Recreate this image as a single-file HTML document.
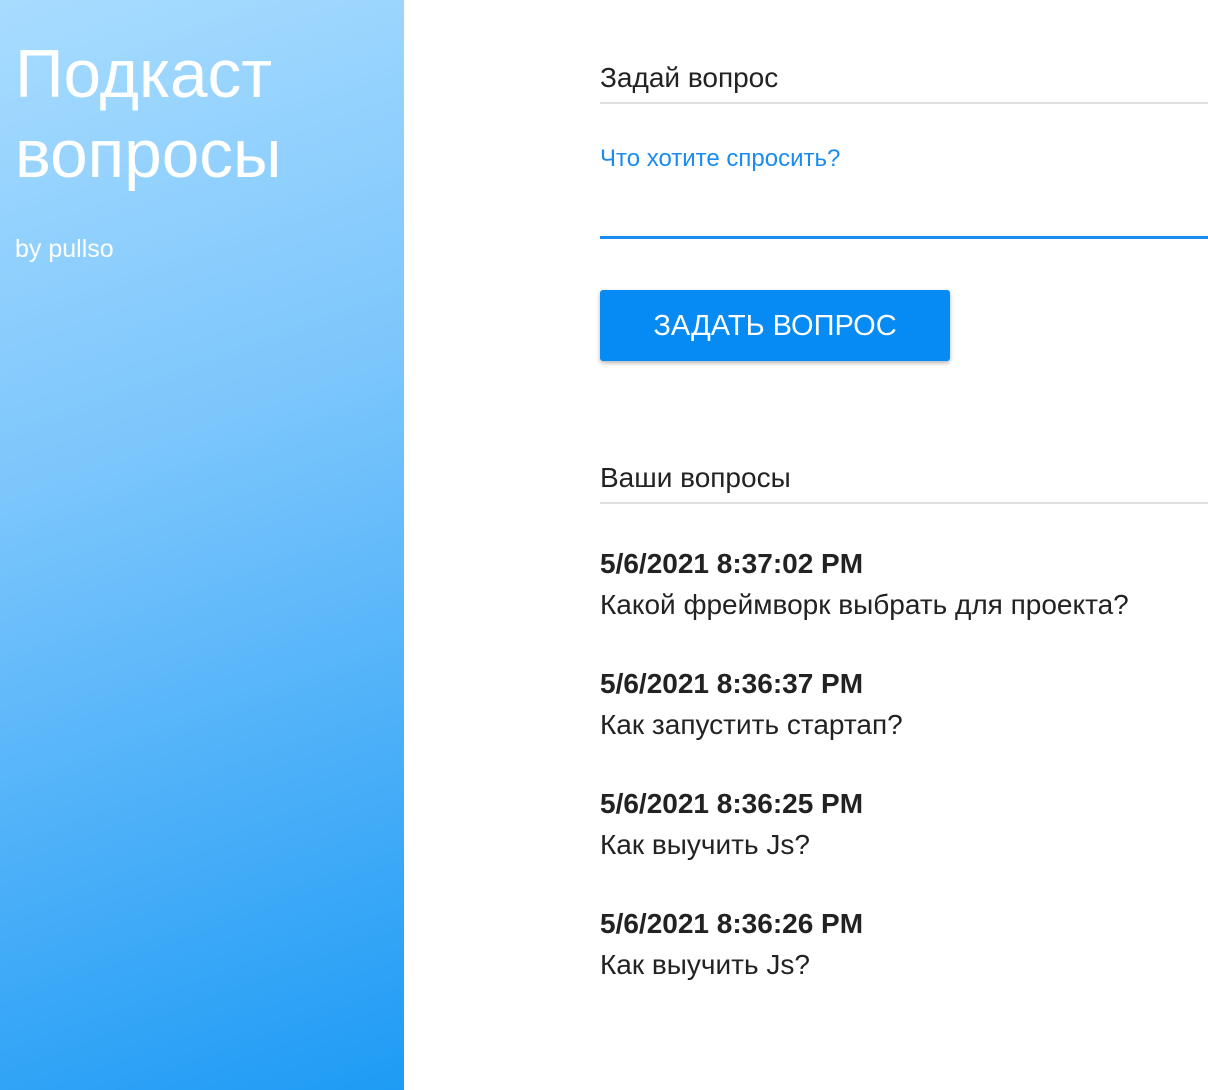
<!DOCTYPE html>
<html><head><meta charset="utf-8"><style>
html,body{margin:0;padding:0;width:1208px;height:1090px;overflow:hidden;background:#fff;font-family:"Liberation Sans",Arial,sans-serif;}
.side{position:absolute;left:0;top:0;width:404px;height:1090px;background:linear-gradient(160deg,#a8dcff 0%,#7cc6fc 40%,#1e9bf5 100%);color:#fff;}
.t{position:absolute;left:15px;top:35px;font-size:67.5px;line-height:80px;}
.by{position:absolute;left:15px;top:235px;font-size:25px;}
.a{position:absolute;left:600px;color:#222;}
.h{font-size:28px;}
.line{position:absolute;left:600px;width:608px;height:2px;background:#e0e0e0;}
</style></head><body>
<div class="side"><div class="t">Подкаст<br>вопросы</div><div class="by">by pullso</div></div>
<div class="a h" style="top:62px">Задай вопрос</div>
<div class="line" style="top:102px"></div>
<div class="a" style="top:145px;font-size:24px;color:#1a8cf0">Что хотите спросить?</div>
<div class="line" style="top:236px;height:3px;background:#1a8cf0"></div>
<div style="position:absolute;left:600px;top:290px;width:350px;height:71px;background:#068af3;border-radius:3px;box-shadow:0 2px 4px rgba(0,0,0,.3);color:#fff;font-size:29px;line-height:72px;text-align:center;">ЗАДАТЬ ВОПРОС</div>
<div class="a h" style="top:462px">Ваши вопросы</div>
<div class="line" style="top:502px"></div>
<div class="a h" style="top:548px;font-weight:bold">5/6/2021 8:37:02 PM</div>
<div class="a h" style="top:589px">Какой фреймворк выбрать для проекта?</div>
<div class="a h" style="top:668px;font-weight:bold">5/6/2021 8:36:37 PM</div>
<div class="a h" style="top:709px">Как запустить стартап?</div>
<div class="a h" style="top:788px;font-weight:bold">5/6/2021 8:36:25 PM</div>
<div class="a h" style="top:829px">Как выучить Js?</div>
<div class="a h" style="top:908px;font-weight:bold">5/6/2021 8:36:26 PM</div>
<div class="a h" style="top:949px">Как выучить Js?</div>
</body></html>
